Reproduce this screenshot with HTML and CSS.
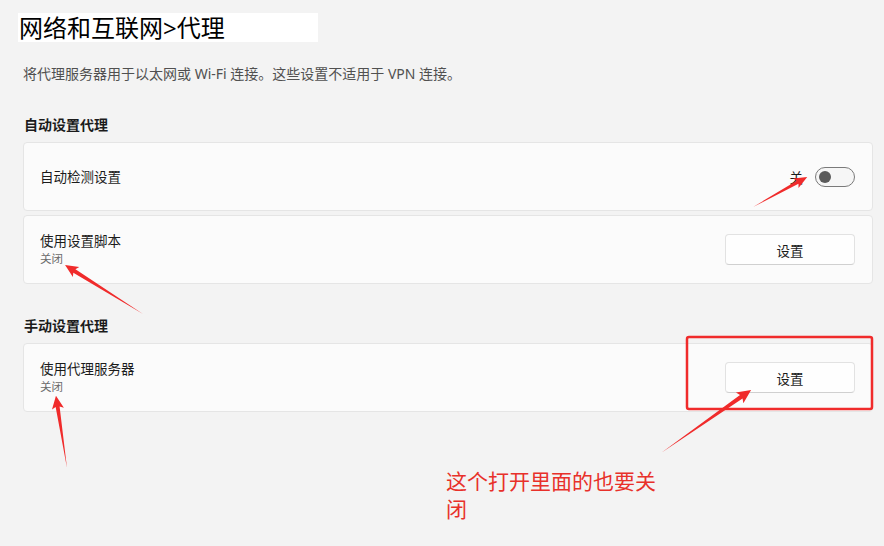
FILE: index.html
```html
<!DOCTYPE html>
<html>
	<head>
		<meta charset="utf-8">
		<title>代理</title>
		<link rel="stylesheet" href="styles.css">
	</head>
	<body>
		<div class="page">
			<div class="crumb">网络和互联网&gt;代理</div>
			<p class="intro">将代理服务器用于以太网或 Wi-Fi 连接。这些设置不适用于 VPN 连接。</p>

			<h2 class="group">自动设置代理</h2>
			<div class="card">
				<div class="label">
					<div class="name">自动检测设置</div>
				</div>
				<div class="state">
					<span>关</span>
					<span class="toggle"><span class="knob"></span></span>
				</div>
			</div>
			<div class="card">
				<div class="label">
					<div class="name">使用设置脚本</div>
					<div class="sub">关闭</div>
				</div>
				<button class="btn">设置</button>
			</div>

			<h2 class="group manual">手动设置代理</h2>
			<div class="card">
				<div class="label">
					<div class="name">使用代理服务器</div>
					<div class="sub">关闭</div>
				</div>
				<button class="btn">设置</button>
			</div>
		</div>

		<!-- marks drawn on top -->
		<svg class="marks" width="884" height="546" viewBox="0 0 884 546">
			<rect x="687" y="337" width="185" height="72" rx="2" fill="none" stroke="#f02b2b" stroke-width="2.5"/>
			<g fill="#f02b2b">
				<polygon transform="translate(753,207) rotate(-29)" points="0,0 51,-1.8 49,-5.5 62,0 49,5.5 51,1.8"/>
				<polygon transform="translate(143,314) rotate(-147.9)" points="0,0 81,-2 79,-6 92,0 79,6 81,2"/>
				<polygon transform="translate(67,468) rotate(-98.7)" points="0,0 62,-2 60,-6 73,0 60,6 62,2"/>
				<polygon transform="translate(661,453) rotate(-35)" points="0,0 98,-2.2 96,-6.5 110,0 96,6.5 98,2.2"/>
			</g>
		</svg>
		<div class="note">这个打开里面的也要关闭</div>
	</body>
</html>
```

FILE: styles.css
```css
html {
	background-color: #f3f3f3;
}
body {
	margin: 0;
	position: relative;
	width: 884px;
	height: 546px;
	overflow: hidden;
	font-family: "Noto Sans", "Noto Sans CJK SC", sans-serif;
	color: #1b1b1b;
}
.page {
	padding: 13px 11px 0 23px;
}
.crumb {
	margin-left: -5px;
	width: 300px;
	height: 29px;
	background: #fff;
	font-size: 24px;
	line-height: 29px;
	color: #000;
	padding-left: 1px;
	box-sizing: border-box;
}
.intro {
	margin: 22px 0 0;
	font-size: 14px;
	line-height: 20px;
	color: #505050;
}
.group {
	margin: 31px 0 7px 1px;
	font-size: 14px;
	line-height: 20px;
	font-weight: 600;
}
.group.manual {
	margin-top: 32px;
}
.card {
	display: flex;
	align-items: center;
	justify-content: space-between;
	height: 69px;
	box-sizing: border-box;
	padding: 0 17px 0 16px;
	margin-bottom: 4px;
	background: #fbfbfb;
	border: 1px solid #e5e5e5;
	border-radius: 4px;
}
.name {
	font-size: 13.5px;
	line-height: 18px;
}
.sub {
	font-size: 11.5px;
	line-height: 16px;
	color: #6a6a6a;
	margin-top: 1px;
}
.state {
	display: flex;
	align-items: center;
	gap: 12px;
	font-size: 13.5px;
}
.toggle {
	display: inline-flex;
	align-items: center;
	width: 40px;
	height: 20px;
	box-sizing: border-box;
	border: 1px solid #7a7a7a;
	border-radius: 10px;
	background: #f6f6f6;
	padding-left: 3px;
}
.knob {
	width: 12px;
	height: 12px;
	border-radius: 50%;
	background: #5b5b5b;
}
.btn {
	width: 130px;
	height: 31px;
	background: #fefefe;
	border: 1px solid #e2e2e2;
	border-bottom-color: #d0d0d0;
	border-radius: 4px;
	font-family: inherit;
	font-size: 13.5px;
	color: #1b1b1b;
}
.marks {
	position: absolute;
	top: 0;
	left: 0;
	pointer-events: none;
}
.note {
	position: absolute;
	left: 446px;
	top: 467px;
	width: 225px;
	font-size: 21px;
	line-height: 28px;
	color: #e8302a;
}
```
